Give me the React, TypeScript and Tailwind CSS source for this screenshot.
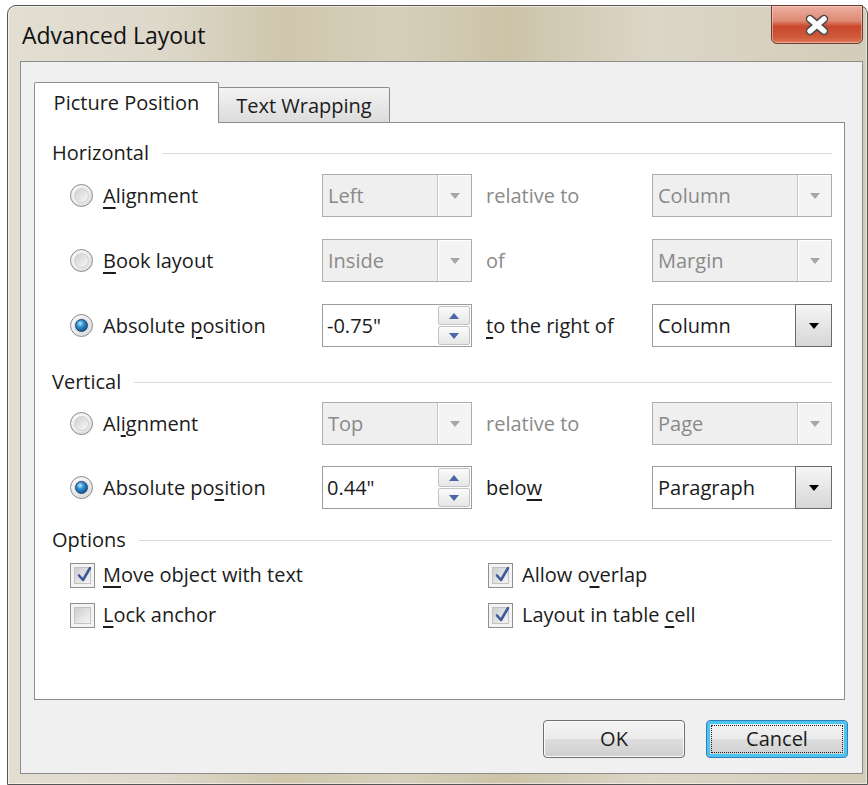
import React from "react";

// Word "Advanced Layout" dialog, Windows 7 look

function Mn({ children }: { children: React.ReactNode }) {
  return <span className="underline decoration-[1.5px] underline-offset-[4px]">{children}</span>;
}

function Radio({ checked }: { checked?: boolean }) {
  return (
    <span className="flex h-[23px] w-[23px] shrink-0 items-center justify-center rounded-full border border-[#8a8b8c] bg-[radial-gradient(circle_at_40%_35%,#ffffff_0%,#ececec_55%,#c9c9c9_100%)]">
      {checked ? (
        <span className="flex h-[16px] w-[16px] items-center justify-center rounded-full bg-[#e0e0e0]">
          <span className="h-[13px] w-[13px] rounded-full border border-[#1a4770] bg-[radial-gradient(circle_at_38%_32%,#bfe8ff_0%,#2f8fd2_35%,#0a3a6a_100%)]" />
        </span>
      ) : (
        <span className="h-[15px] w-[15px] rounded-full border border-[#cfcfcf] bg-[linear-gradient(135deg,#cfcfcf,#f8f8f8)]" />
      )}
    </span>
  );
}

function Check({ checked }: { checked?: boolean }) {
  return (
    <span className="flex h-[25px] w-[25px] shrink-0 items-center justify-center border border-[#8f8f8f] bg-[#f4f4f4]">
      <span className="relative flex h-[17px] w-[17px] items-center justify-center border border-[#c3c3c3] bg-[linear-gradient(135deg,#cdcdcd,#f6f6f6)]">
        {checked && (
          <svg width="17" height="18" viewBox="0 0 17 18" className="absolute -top-[3px] left-[1px]">
            <path d="M3 10.5 L7 15 L14 3" fill="none" stroke="#3d5a9c" strokeWidth="2.6" strokeLinecap="round" strokeLinejoin="round" />
          </svg>
        )}
      </span>
    </span>
  );
}

function Tri({ color, up }: { color: string; up?: boolean }) {
  return (
    <svg width="10" height="6" viewBox="0 0 10 6">
      <path d={up ? "M0 6 L5 0 L10 6 Z" : "M0 0 L10 0 L5 6 Z"} fill={color} />
    </svg>
  );
}

function Combo({ value, disabled, size }: { value: string; disabled?: boolean; size: string }) {
  if (disabled) {
    return (
      <div className={`flex h-[43px] shrink-0 border border-[#adadad] bg-[#efefef] ${size}`}>
        <span className="flex flex-1 items-center pl-[5px] text-[#8a8a8a]">{value}</span>
        <span className="flex w-[34px] items-center justify-center border-l border-[#c6c6c6] bg-[#f4f4f4] shadow-[inset_1px_1px_0_#ffffff]">
          <Tri color="#a6a6a6" />
        </span>
      </div>
    );
  }
  return (
    <div className={`flex h-[43px] shrink-0 border border-[#9c9c9c] bg-white ${size}`}>
      <span className="flex flex-1 items-center pl-[5px]">{value}</span>
      <span className="-my-px -mr-px flex w-[37px] items-center justify-center border border-[#6a6a6a] bg-[linear-gradient(to_bottom,#f6f6f6,#d6d6d6)]">
        <Tri color="#000000" />
      </span>
    </div>
  );
}

function Spin({ value }: { value: string }) {
  return (
    <div className="flex h-[43px] w-[150px] shrink-0 border border-[#9c9c9c] bg-white">
      <span className="flex flex-1 items-center pl-[4px]">{value}</span>
      <span className="flex w-[34px] flex-col gap-px p-px">
        <span className="flex flex-1 items-center justify-center rounded-[2px] border border-[#c3c3c3] bg-[linear-gradient(to_bottom,#fbfbfb,#e6e6e6)]">
          <Tri color="#4a66a6" up />
        </span>
        <span className="flex flex-1 items-center justify-center rounded-[2px] border border-[#c3c3c3] bg-[linear-gradient(to_bottom,#fbfbfb,#e6e6e6)]">
          <Tri color="#4a66a6" />
        </span>
      </span>
    </div>
  );
}

function Group({ title, className }: { title: string; className: string }) {
  return (
    <div className={`flex h-[24px] items-center gap-[13px] pl-[17px] pr-[12px] ${className}`}>
      <span>{title}</span>
      <span className="h-px flex-1 bg-[#d3dde3]" />
    </div>
  );
}

function Row({
  checked,
  label,
  first,
  word,
  second,
  className,
}: {
  checked?: boolean;
  label: React.ReactNode;
  first: React.ReactNode;
  word: React.ReactNode;
  second: React.ReactNode;
  className: string;
}) {
  return (
    <div className={`flex h-[43px] items-center pl-[35px] ${className}`}>
      <Radio checked={checked} />
      <span className="ml-[10px] w-[219px]">{label}</span>
      {first}
      <span className="ml-[14px] w-[166px]">{word}</span>
      {second}
    </div>
  );
}

export default function App() {
  return (
    <div className="relative h-[785px] w-[868px] overflow-hidden bg-white font-['Open_Sans',sans-serif] text-[20px] leading-none text-[#1b1b1b]">
      <div className="relative ml-[7px] mt-[5px] flex h-[780px] w-[861px] flex-col rounded-t-[9px] border border-[#555555] bg-[linear-gradient(to_right,#e2ded2_0%,#ddd8ca_18%,#cfc6ac_32%,#d6cfba_45%,#ccc3a8_58%,#dcd6c7_75%,#d3ccb8_100%)] pl-[12px] pr-[4px] shadow-[inset_0_0_0_1px_rgba(255,255,255,0.55)]">
        {/* title bar */}
        <div className="flex h-[55px] items-center pl-[2px] pt-[3px] text-[23px] text-[#111111]">Advanced Layout</div>

        {/* close button */}
        <div className="absolute -top-px right-[4px] flex h-[39px] w-[92px] items-center justify-center rounded-b-[6px] border border-[#6b3d32] bg-[linear-gradient(to_bottom,#ebb0a0_0%,#df8a74_40%,#c9472c_55%,#cf5a3c_85%,#e07a5c_100%)] shadow-[inset_0_0_0_1px_rgba(255,220,210,0.5)]">
          <svg width="30" height="22" viewBox="0 0 30 22">
            <path d="M8 5 L22 17 M22 5 L8 17" stroke="#4a4a4a" strokeWidth="8.5" strokeLinecap="round" />
            <path d="M8 5 L22 17 M22 5 L8 17" stroke="#ffffff" strokeWidth="5.5" strokeLinecap="round" />
          </svg>
        </div>

        {/* client area */}
        <div className="flex h-[713px] w-[843px] flex-col border border-[#8c8c8c] bg-[#f0f0f0]">
          {/* tabs */}
          <div className="ml-[13px] mt-[20px] flex h-[40px] items-end">
            <div className="relative z-10 -mb-px flex h-[41px] w-[185px] items-center justify-center rounded-t-[2px] border border-b-0 border-[#898c95] bg-white">
              Picture Position
            </div>
            <div className="-ml-px flex h-[35px] w-[172px] items-center justify-center rounded-t-[2px] border border-b-0 border-[#898c95] bg-[linear-gradient(to_bottom,#f3f3f3,#dcdcdc)] pt-[2px]">
              Text Wrapping
            </div>
          </div>

          {/* tab page */}
          <div className="ml-[13px] flex h-[578px] w-[811px] flex-col border border-[#898c95] bg-white pt-[18px]">
            <Group title="Horizontal" className="" />
            <Row
              className="mt-[9px]"
              label={<><Mn>A</Mn>lignment</>}
              first={<Combo value="Left" disabled size="w-[150px]" />}
              word={<span className="text-[#8a8a8a]">relative to</span>}
              second={<Combo value="Column" disabled size="w-[180px]" />}
            />
            <Row
              className="mt-[22px]"
              label={<><Mn>B</Mn>ook layout</>}
              first={<Combo value="Inside" disabled size="w-[150px]" />}
              word={<span className="text-[#8a8a8a]">of</span>}
              second={<Combo value="Margin" disabled size="w-[180px]" />}
            />
            <Row
              className="mt-[22px]"
              checked
              label={<>Absolute <Mn>p</Mn>osition</>}
              first={<Spin value={'-0.75"'} />}
              word={<><Mn>t</Mn>o the right of</>}
              second={<Combo value="Column" size="w-[180px]" />}
            />

            <Group title="Vertical" className="mt-[23px]" />
            <Row
              className="mt-[8px]"
              label={<>Al<Mn>i</Mn>gnment</>}
              first={<Combo value="Top" disabled size="w-[150px]" />}
              word={<span className="text-[#8a8a8a]">relative to</span>}
              second={<Combo value="Page" disabled size="w-[180px]" />}
            />
            <Row
              className="mt-[21px]"
              checked
              label={<>Absolute po<Mn>s</Mn>ition</>}
              first={<Spin value={'0.44"'} />}
              word={<>belo<Mn>w</Mn></>}
              second={<Combo value="Paragraph" size="w-[180px]" />}
            />

            <Group title="Options" className="mt-[19px]" />
            <div className="mt-[8px] grid grid-cols-[418px_1fr] gap-y-[10px] pl-[35px]">
              <div className="flex h-[30px] items-center gap-[8px]">
                <Check checked />
                <span><Mn>M</Mn>ove object with text</span>
              </div>
              <div className="flex h-[30px] items-center gap-[9px]">
                <Check checked />
                <span>Allow o<Mn>v</Mn>erlap</span>
              </div>
              <div className="flex h-[30px] items-center gap-[8px]">
                <Check />
                <span><Mn>L</Mn>ock anchor</span>
              </div>
              <div className="flex h-[30px] items-center gap-[9px]">
                <Check checked />
                <span>Layout in table <Mn>c</Mn>ell</span>
              </div>
            </div>
          </div>

          {/* dialog buttons */}
          <div className="mt-[20px] flex justify-end gap-[21px] pr-[14px]">
            <button className="flex h-[38px] w-[142px] items-center justify-center rounded-[4px] border border-[#707070] bg-[linear-gradient(to_bottom,#f4f4f4_0%,#ebebeb_50%,#dddddd_51%,#cfcfcf_100%)] shadow-[inset_0_0_0_1px_#fbfbfb]">
              OK
            </button>
            <button className="flex h-[38px] w-[142px] items-center justify-center rounded-[4px] border border-[#2f7fb8] bg-[linear-gradient(to_bottom,#f2f2f2_0%,#ebebeb_50%,#dddddd_51%,#cfcfcf_100%)] p-[4px] shadow-[inset_0_0_0_3px_#4cc4f2]">
              <span className="flex h-full w-full items-center justify-center border border-dotted border-[#222222]">Cancel</span>
            </button>
          </div>
        </div>
      </div>
    </div>
  );
}
